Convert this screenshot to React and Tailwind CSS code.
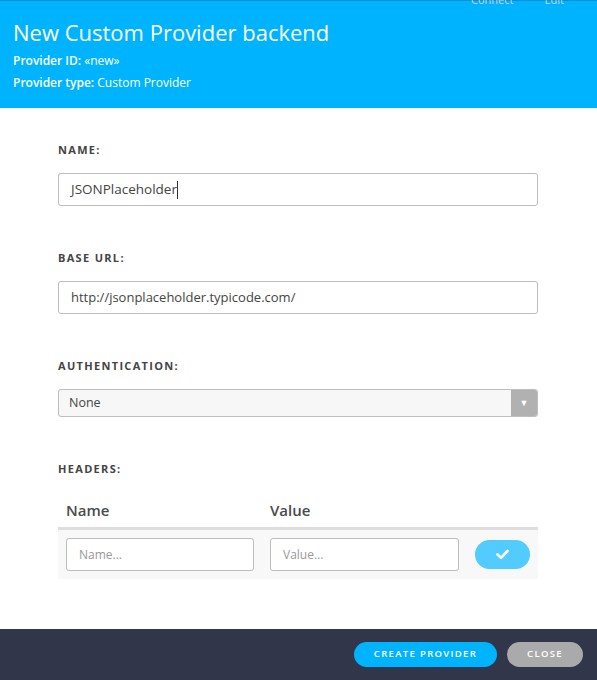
import React from "react";

export default function App() {
  const font = { fontFamily: '"Open Sans", "Liberation Sans", sans-serif' };
  return (
    <div className="w-[597px] h-[680px] flex flex-col bg-white overflow-hidden" style={font}>
      <div className="h-[108px] bg-[#00b3ff] border-t border-[#0a8fcc] relative px-[13px] pt-[17px]">
        <div className="absolute top-[-9px] left-[471px] flex gap-[31px] text-[11px] text-[#c9d3da] whitespace-nowrap">
          <span>Connect</span>
          <span>Edit</span>
        </div>
        <h1 className="text-[22px] leading-[28px] font-medium text-white">New Custom Provider backend</h1>
        <div className="mt-[7px] text-[12px] leading-[16px] text-white">
          <span className="font-semibold">Provider ID:</span> «new»
        </div>
        <div className="mt-[6px] text-[12px] leading-[16px] text-white">
          <span className="font-semibold">Provider type:</span> Custom Provider
        </div>
      </div>

      <div className="flex-1 px-[58px] pt-[35px]">
        <div className="w-[480px]">
          <label className="block text-[11px] leading-[14px] font-bold tracking-[0.12em] text-[#444]">NAME:</label>
          <div className="mt-[16px] h-[33px] border border-[#bdbdbd] rounded-[3px] flex items-center px-[12px] text-[13.5px] text-[#444]">
            JSONPlaceholder<span className="inline-block w-px h-[18px] bg-[#333]"></span>
          </div>

          <label className="block mt-[45px] text-[11px] leading-[14px] font-bold tracking-[0.12em] text-[#444]">BASE URL:</label>
          <div className="mt-[16px] h-[33px] border border-[#bdbdbd] rounded-[3px] flex items-center px-[12px] text-[13px] text-[#444]">
            http://jsonplaceholder.typicode.com/
          </div>

          <label className="block mt-[45px] text-[11px] leading-[14px] font-bold tracking-[0.12em] text-[#444]">AUTHENTICATION:</label>
          <div className="mt-[16px] h-[28px] border border-[#bdbdbd] rounded-[3px] flex items-stretch bg-[#f7f7f7] overflow-hidden">
            <div className="flex-1 flex items-center px-[10px] text-[12.5px] text-[#444]">None</div>
            <div className="w-[26px] bg-[#b1b1b1] flex items-center justify-center text-white text-[9px]">▼</div>
          </div>

          <label className="block mt-[45px] text-[11px] leading-[14px] font-bold tracking-[0.12em] text-[#444]">HEADERS:</label>
          <div className="mt-[23px] flex h-[28px] items-start text-[15px] font-semibold text-[#4a4a4a]">
            <div className="w-[204px] pl-[8px]">Name</div>
            <div className="pl-[8px]">Value</div>
          </div>
          <div className="border-t-[3px] border-[#dddddd] bg-[#f8f8f8] h-[52px] flex items-center px-[8px] gap-[16px]">
            <div className="w-[188px] h-[33px] bg-white border border-[#bdbdbd] rounded-[3px] flex items-center px-[12px] text-[12px] text-[#999]">Name...</div>
            <div className="w-[189px] h-[33px] bg-white border border-[#bdbdbd] rounded-[3px] flex items-center px-[12px] text-[12px] text-[#999]">Value...</div>
            <div className="w-[55px] h-[29px] rounded-full bg-[#52cbfe] flex items-center justify-center">
              <svg width="13" height="11" viewBox="0 0 13 11">
                <path d="M1.5 5.5 L5 8.8 L11.5 2" stroke="white" strokeWidth="2.6" fill="none" strokeLinecap="round" strokeLinejoin="round" />
              </svg>
            </div>
          </div>
        </div>
      </div>

      <div className="h-[51px] bg-[#31364a] flex items-center justify-end pr-[14px] gap-[10px]">
        <button className="h-[25px] w-[143px] rounded-full bg-[#00b3ff] text-white text-[9.5px] font-semibold tracking-[0.14em]">CREATE PROVIDER</button>
        <button className="h-[25px] w-[76px] rounded-full bg-[#aaaaaa] text-white text-[9.5px] font-semibold tracking-[0.14em]">CLOSE</button>
      </div>
    </div>
  );
}
